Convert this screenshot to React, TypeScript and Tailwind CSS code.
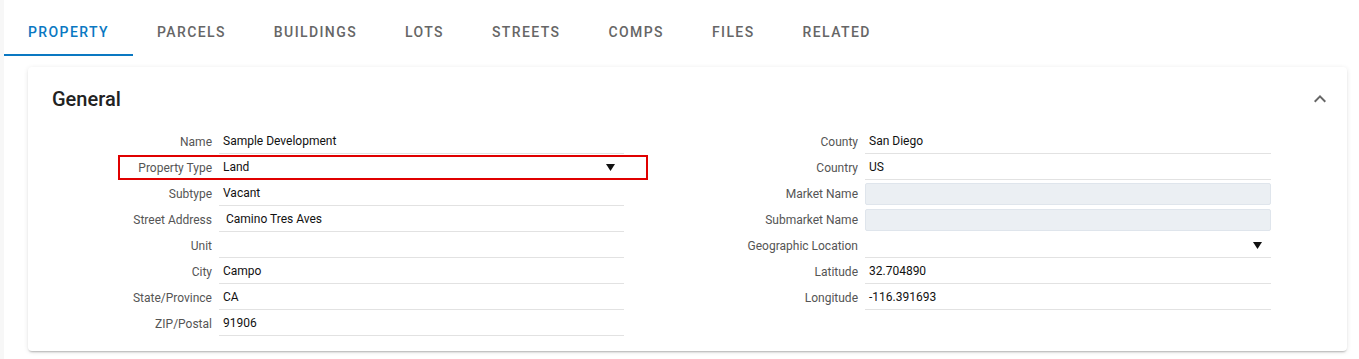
import { ReactNode } from "react";

const tabs = ["PROPERTY", "PARCELS", "BUILDINGS", "LOTS", "STREETS", "COMPS", "FILES", "RELATED"];

type Field = {
  label: string;
  value?: string;
  kind?: "text" | "select" | "disabled";
  highlight?: boolean;
};

const leftFields: Field[] = [
  { label: "Name", value: "Sample Development" },
  { label: "Property Type", value: "Land", kind: "select", highlight: true },
  { label: "Subtype", value: "Vacant" },
  { label: "Street Address", value: " Camino Tres Aves" },
  { label: "Unit", value: "" },
  { label: "City", value: "Campo" },
  { label: "State/Province", value: "CA" },
  { label: "ZIP/Postal", value: "91906" },
];

const rightFields: Field[] = [
  { label: "County", value: "San Diego" },
  { label: "Country", value: "US" },
  { label: "Market Name", kind: "disabled" },
  { label: "Submarket Name", kind: "disabled" },
  { label: "Geographic Location", value: "", kind: "select" },
  { label: "Latitude", value: "32.704890" },
  { label: "Longitude", value: "-116.391693" },
];

function Caret() {
  return (
    <svg width="9" height="7" viewBox="0 0 9 7" className="shrink-0">
      <path d="M0 0 H9 L4.5 7 Z" fill="#111" />
    </svg>
  );
}

function Row({ field, valueWidth }: { field: Field; valueWidth: string }) {
  let box: ReactNode;
  if (field.kind === "disabled") {
    box = (
      <div className={`${valueWidth} h-[22px] mt-[3px] mb-[1px] bg-[#ebeff3] border border-[#dfe5ec] rounded-[2px]`} />
    );
  } else {
    box = (
      <div className={`${valueWidth} h-[26px] flex items-center justify-between pl-[4px] pr-[9px] pt-[1px] border-b border-[#e2e2e2]`}>
        <span className="whitespace-pre text-[12px] text-[#111]">{field.value}</span>
        {field.kind === "select" && <Caret />}
      </div>
    );
  }
  return (
    <div className="relative flex items-start h-[26px]">
      <div className="w-[160px] h-[26px] pt-[1px] flex items-center justify-end text-[12px] text-[#555] whitespace-nowrap">
        {field.label}
      </div>
      <div className="ml-[7px]">{box}</div>
      {field.highlight && (
        <div className="absolute left-[66px] top-[1px] w-[530px] h-[25px] border-2 border-[#e00000] pointer-events-none" />
      )}
    </div>
  );
}

export default function App() {
  return (
    <div className="w-[1359px] h-[359px] bg-white flex overflow-hidden" style={{ fontFamily: "Roboto, 'Liberation Sans', sans-serif" }}>
      <div className="w-[4px] shrink-0 bg-[#f7f7f7]" />
      <div className="flex-1 flex flex-col pt-2">
        <nav className="flex h-[48px]">
          {tabs.map((t, i) => (
            <div
              key={t}
              className={`relative px-6 flex items-center text-[14px] font-medium tracking-[1.4px] ${
                i === 0 ? "text-[#0a78c2]" : "text-[#666]"
              }`}
            >
              {t}
              {i === 0 && <div className="absolute left-0 right-0 bottom-0 h-[2px] bg-[#0a78c2]" />}
            </div>
          ))}
        </nav>

        <section className="ml-6 mr-3 mt-[11px] h-[284px] bg-white rounded-[4px] shadow-[0_2px_2px_-1px_rgba(0,0,0,0.25),0_1px_5px_0_rgba(0,0,0,0.1)] px-6 pt-[20px]">
          <div className="flex items-center justify-between h-[24px]">
            <h2 className="text-[20px] font-medium text-[#222] leading-[24px]">General</h2>
            <svg width="12" height="8" viewBox="0 0 12 8" className="mr-[-3px]">
              <path d="M1.4 7.4 L6 2.8 L10.6 7.4 L12 6 L6 0 L0 6 Z" fill="#666" />
            </svg>
          </div>

          <div className="flex mt-[17px]">
            <div className="flex flex-col">
              {leftFields.map((f) => (
                <Row key={f.label} field={f} valueWidth="w-[405px]" />
              ))}
            </div>
            <div className="flex flex-col ml-[74px]">
              {rightFields.map((f) => (
                <Row key={f.label} field={f} valueWidth="w-[406px]" />
              ))}
            </div>
          </div>
        </section>
      </div>
    </div>
  );
}
